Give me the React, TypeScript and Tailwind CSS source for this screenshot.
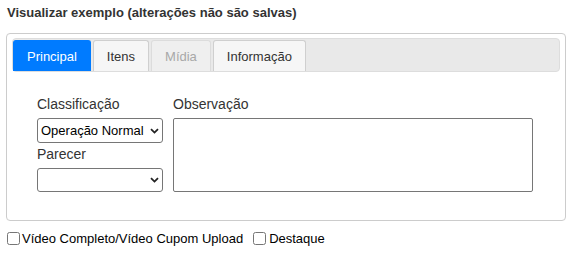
import React from 'react'

type Tab = { label: string; active?: boolean; disabled?: boolean }

const tabs: Tab[] = [
  { label: 'Principal', active: true },
  { label: 'Itens' },
  { label: 'Mídia', disabled: true },
  { label: 'Informação' },
]

function tabClass(tab: Tab): string {
  if (tab.active) return 'border-[#007bff] bg-[#007bff] text-white'
  if (tab.disabled) return 'border-[#dcdcdc] bg-[#efefef] text-[#a8a8a8]'
  return 'border-[#cfcfcf] bg-[#f6f6f6] text-[#333]'
}

function Select({ value, className }: { value: string; className: string }) {
  return (
    <div className={`relative w-[126px] ${className}`}>
      <select className="h-full w-full appearance-none rounded-[3px] border border-[#767676] bg-white pl-[3px] text-[13px] text-black">
        <option>{value}</option>
      </select>
      <svg
        className="pointer-events-none absolute right-[4px] top-1/2 -translate-y-1/2"
        width="9"
        height="6"
        viewBox="0 0 9 6"
        fill="none"
      >
        <path d="M1 1.2 4.5 4.6 8 1.2" stroke="#222" strokeWidth="1.8" />
      </svg>
    </div>
  )
}

export default function App() {
  return (
    <div className="w-[576px] h-[253px] bg-white px-[6px] text-[#333] font-['Liberation_Sans',Arial,sans-serif]">
      <div className="pt-[5px] pl-[1px] text-[13px] leading-[16px] font-bold text-[#333]">
        Visualizar exemplo (alterações não são salvas)
      </div>

      <div className="mt-[12px] w-[560px] h-[188px] rounded-[4px] border border-[#cccccc] px-[5px] pt-[4px]">
        <div className="flex h-[34px] items-end gap-[2px] rounded-[4px] border border-[#dddddd] bg-[#e9e9e9]">
          {tabs.map((tab) => (
            <div
              key={tab.label}
              className={`flex h-[31px] items-center rounded-t-[3px] border border-b-0 px-[13px] text-[13px] leading-[15px] ${tabClass(tab)}`}
            >
              {tab.label}
            </div>
          ))}
        </div>

        <div className="flex gap-[10px] pl-[25px] pt-[24px] text-[14px]">
          <div className="flex w-[126px] flex-col">
            <label className="leading-[16px]">Classificação</label>
            <Select value="Operação Normal" className="mt-[6px] h-[25px]" />
            <label className="mt-[3px] leading-[16px]">Parecer</label>
            <Select value="" className="mt-[6px] h-[24px]" />
          </div>
          <div className="flex flex-col">
            <label className="leading-[16px]">Observação</label>
            <textarea className="mt-[6px] h-[74px] w-[360px] resize-none rounded-[2px] border border-[#767676] bg-white" />
          </div>
        </div>
      </div>

      <div className="mt-[10px] flex items-center pl-[1px] text-[13px] leading-[15px] text-black">
        <label className="flex items-center gap-[2px]">
          <input type="checkbox" className="m-0 h-[13px] w-[13px]" />
          <span>Vídeo Completo/Vídeo Cupom Upload</span>
        </label>
        <label className="ml-[10px] flex items-center gap-[3px]">
          <input type="checkbox" className="m-0 h-[13px] w-[13px]" />
          <span>Destaque</span>
        </label>
      </div>
    </div>
  )
}
